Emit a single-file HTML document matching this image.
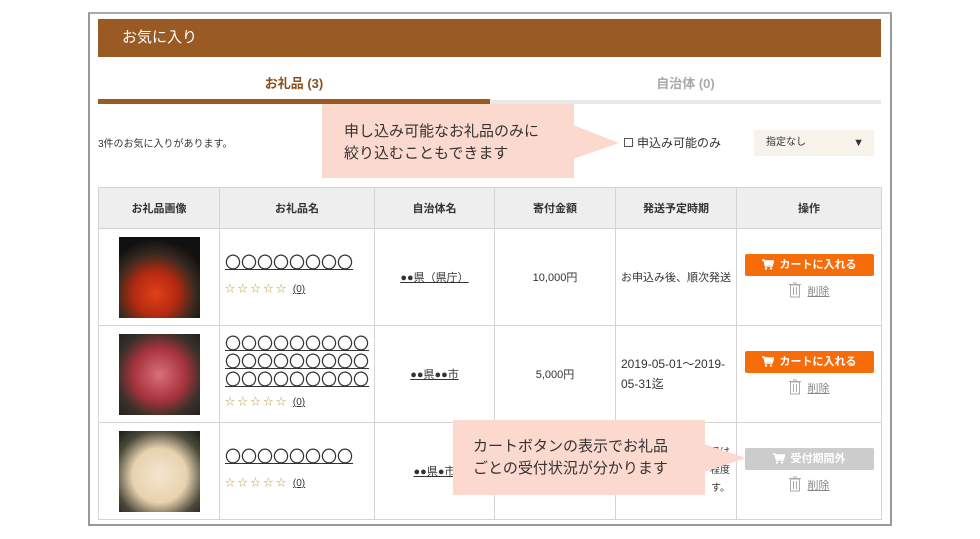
<!DOCTYPE html><html><head><meta charset="utf-8"><style>
*{margin:0;padding:0;box-sizing:border-box}
body{width:980px;height:539px;background:#fff;font-family:"Liberation Sans","Noto Sans CJK JP",sans-serif;position:relative;overflow:hidden;color:#333}
.a{position:absolute}
.frame{left:88px;top:12px;width:804px;height:514px;border:2px solid #999;border-top-color:#aaa}
.hdr{left:98px;top:19px;width:783px;height:38px;background:#9a5a24;color:#fff;font-size:15px;line-height:38px;padding-left:24px}
table{position:absolute;left:98px;top:187px;border-collapse:collapse;font-size:11px}
td,th{border:1px solid #d4d4d4;text-align:center;vertical-align:middle}
th{background:#eee;height:41px;font-weight:bold;font-size:11px}
td{height:97px}
.nm{text-align:left;padding-left:5px;font-size:16px;line-height:18px}
.st{font-size:10px;color:#c9a34a;margin-top:8px}
.st span{color:#333;text-decoration:underline;margin-left:4px}
.btn{width:129px;height:22px;margin:0 auto;background:#f66c0a;color:#fff;font-weight:bold;font-size:11px;line-height:22px;border-radius:2px}
.btn svg{vertical-align:-2px;margin-right:6px}
.btn.g{background:#ccc}
.del{color:#999;font-size:11px;margin-top:6px;line-height:16px}
.del svg{vertical-align:-3px;margin-right:7px}
.del u{color:#888}
.img{width:81px;height:81px;margin:0 auto}
.co{background:#fcd9cf;font-size:15px;line-height:22px;color:#333}
</style></head><body>
<svg width="0" height="0" style="position:absolute"><defs>
<symbol id="cart" viewBox="0 0 12 11"><path d="M0 1h2l1.5 6h6.5l1.5-5H3" fill="none" stroke="#fff" stroke-width="1.6"/><rect x="3" y="2.5" width="7.5" height="3.5" fill="#fff"/><circle cx="4" cy="9.5" r="1.2" fill="#fff"/><circle cx="9" cy="9.5" r="1.2" fill="#fff"/></symbol>
<symbol id="tr" viewBox="0 0 12 16"><rect x="1.5" y="3" width="9" height="12" fill="none" stroke="#aaa" stroke-width="1"/><path d="M0 2.5h12M4 1h4M4.5 5v8M7.5 5v8" stroke="#aaa" stroke-width="1"/></symbol>
</defs></svg>
<div class="a frame"></div>
<div class="a hdr">お気に入り</div>
<div class="a" style="left:98px;top:73px;width:392px;text-align:center;font-weight:bold;font-size:13px;color:#8a4f1c">お礼品 (3)</div>
<div class="a" style="left:490px;top:73px;width:391px;text-align:center;font-weight:bold;font-size:13px;color:#aaa">自治体 (0)</div>
<div class="a" style="left:98px;top:99px;width:392px;height:5px;background:#9a5a24"></div>
<div class="a" style="left:490px;top:100px;width:391px;height:4px;background:#e8e8e8"></div>
<div class="a" style="left:98px;top:135px;font-size:10px">3件のお気に入りがあります。</div>
<div class="a" style="left:624px;top:138px;width:9px;height:9px;border:1px solid #555"></div>
<div class="a" style="left:637px;top:134px;font-size:12px">申込み可能のみ</div>
<div class="a" style="left:754px;top:130px;width:120px;height:26px;background:#f7f3ea;font-size:10px;line-height:26px;padding-left:12px">指定なし<span style="position:absolute;right:10px;font-size:11px">▼</span></div>
<table>
<tr><th style="width:121px">お礼品画像</th><th style="width:155px">お礼品名</th><th style="width:120px">自治体名</th><th style="width:121px">寄付金額</th><th style="width:121px">発送予定時期</th><th style="width:145px">操作</th></tr>
<tr><td><div class="img" style="background:radial-gradient(circle at 45% 70%,#e0401a 0,#b52a10 30%,#3a2a20 55%,#111 75%)"></div></td>
<td class="nm"><u>〇〇〇〇〇〇〇〇</u><div class="st">☆ ☆ ☆ ☆ ☆ <span>(0)</span></div></td>
<td><u>●●県（県庁）</u></td><td>10,000円</td><td style="text-align:left;padding-left:5px">お申込み後、順次発送</td>
<td><div class="btn"><svg width="12" height="11"><use href="#cart"/></svg>カートに入れる</div><div class="del"><svg width="12" height="16"><use href="#tr"/></svg><u>削除</u></div></td></tr>
<tr><td><div class="img" style="background:radial-gradient(ellipse at 50% 50%,#d8707a 0,#a8343f 45%,#3a3028 75%,#222 100%)"></div></td>
<td class="nm"><u>〇〇〇〇〇〇〇〇〇<br>〇〇〇〇〇〇〇〇〇<br>〇〇〇〇〇〇〇〇〇</u><div class="st" style="margin-top:4px">☆ ☆ ☆ ☆ ☆ <span>(0)</span></div></td>
<td><u>●●県●●市</u></td><td>5,000円</td><td style="text-align:left;padding-left:5px;font-size:12px;line-height:20px">2019-05-01〜2019-05-31迄</td>
<td><div class="btn"><svg width="12" height="11"><use href="#cart"/></svg>カートに入れる</div><div class="del"><svg width="12" height="16"><use href="#tr"/></svg><u>削除</u></div></td></tr>
<tr><td><div class="img" style="background:radial-gradient(circle at 50% 55%,#f3e6cf 0,#e8d2ae 45%,#4a4a3a 75%,#1a1a1a 100%)"></div></td>
<td class="nm"><u>〇〇〇〇〇〇〇〇</u><div class="st">☆ ☆ ☆ ☆ ☆ <span>(0)</span></div></td>
<td><u>●●県●市</u></td><td></td><td style="text-align:right;padding-right:6px;font-size:10px;line-height:18px">の日は<br>程度<br>す。</td>
<td><div class="btn g"><svg width="12" height="11"><use href="#cart"/></svg>受付期間外</div><div class="del"><svg width="12" height="16"><use href="#tr"/></svg><u>削除</u></div></td></tr>
</table>
<div class="a co" style="left:322px;top:104px;width:252px;height:74px;padding:17px 0 0 22px">申し込み可能なお礼品のみに<br>絞り込むこともできます</div>
<svg class="a" style="left:573px;top:125px" width="50" height="36"><polygon points="0,0 46,18 0,34" fill="#fcd9cf"/></svg>
<div class="a co" style="left:453px;top:420px;width:252px;height:75px;padding:16px 0 0 20px">カートボタンの表示でお礼品<br>ごとの受付状況が分かります</div>
<svg class="a" style="left:704px;top:444px" width="44" height="30"><polygon points="0,0 42,14 0,28" fill="#fcd9cf"/></svg>
</body></html>
